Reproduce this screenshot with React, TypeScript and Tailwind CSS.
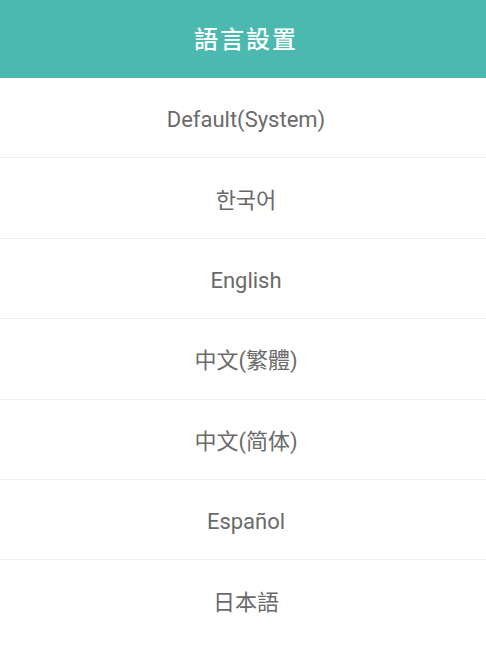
import React from "react";

const langs = ["Default(System)", "한국어", "English", "中文(繁體)", "中文(简体)", "Español", "日本語"];

export default function App() {
  return (
    <div className="w-[486px] h-[653px] bg-white overflow-hidden" style={{ fontFamily: 'Roboto, "Noto Sans CJK TC", "Noto Sans CJK KR", sans-serif' }}>
      <div className="h-[78px] bg-[#4cb9b0] flex items-center justify-center pl-[6px]">
        <span className="text-white text-[24px] font-medium tracking-[2px] pt-[1px]">語言設置</span>
      </div>
      {langs.map((l, i) => (
        <div
          key={l}
          className={
            i < langs.length - 1
              ? "h-[80.4px] box-border border-b border-[#efefef] flex items-center justify-center pt-[4px] pl-[6px]"
              : "h-[80.4px] box-border flex items-center justify-center pt-[4px] pl-[6px]"
          }
        >
          <span className="text-[#6a6a6a] text-[22px]">{l}</span>
        </div>
      ))}
    </div>
  );
}
